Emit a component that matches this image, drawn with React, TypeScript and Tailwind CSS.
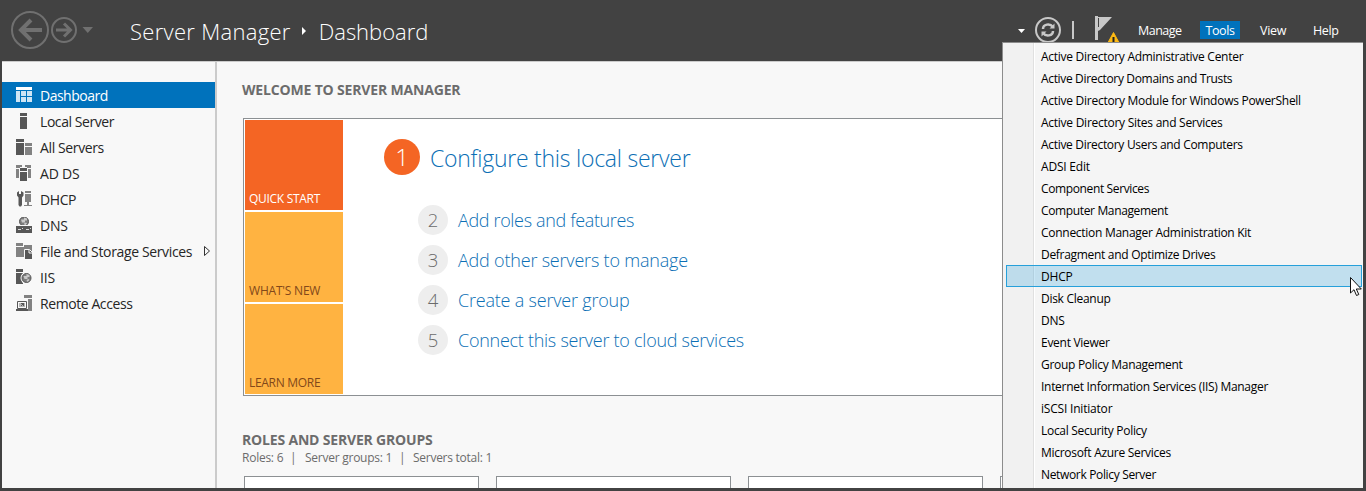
import React from 'react';

const menu: [string, string][] = [
  ['Active Directory Administrative Center', 'tracking-[-0.28px]'],
  ['Active Directory Domains and Trusts', 'tracking-[-0.34px]'],
  ['Active Directory Module for Windows PowerShell', 'tracking-[-0.27px]'],
  ['Active Directory Sites and Services', 'tracking-[-0.26px]'],
  ['Active Directory Users and Computers', 'tracking-[-0.31px]'],
  ['ADSI Edit', 'tracking-[-0.2px]'],
  ['Component Services', 'tracking-[-0.37px]'],
  ['Computer Management', 'tracking-[-0.36px]'],
  ['Connection Manager Administration Kit', 'tracking-[-0.28px]'],
  ['Defragment and Optimize Drives', 'tracking-[-0.3px]'],
  ['DHCP', 'tracking-[-0.2px]'],
  ['Disk Cleanup', 'tracking-[-0.28px]'],
  ['DNS', 'tracking-[-0.2px]'],
  ['Event Viewer', 'tracking-[-0.28px]'],
  ['Group Policy Management', 'tracking-[-0.29px]'],
  ['Internet Information Services (IIS) Manager', 'tracking-[-0.29px]'],
  ['iSCSI Initiator', 'tracking-[-0.2px]'],
  ['Local Security Policy', 'tracking-[-0.3px]'],
  ['Microsoft Azure Services', 'tracking-[-0.29px]'],
  ['Network Policy Server', 'tracking-[-0.34px]'],
];

const Globe = ({ cx, cy }: { cx: number; cy: number }) => (
  <g>
    <circle cx={cx} cy={cy} r="4.500" fill="#7d7d7d" stroke="#575757" />
    <path d={`M${cx - 3} ${cy - 2}h3v-2l3 1v2h-2v2h-3zM${cx} ${cy + 2}l2-1 1 1-2 2z`} fill="#c9c9c9" />
  </g>
);

const icons: Record<string, React.ReactNode> = {
  Dashboard: (
    <>
      <path fill="#fff" d="M0 0h16v3H0z" />
      <path fill="#cfe5f4" d="M0 4h4v11H0zM5 4h5v5H5zM11 4h5v5h-5zM5 10h5v5H5zM11 10h5v5h-5z" />
    </>
  ),
  'Local Server': <path fill="#575757" d="M4 0h7v3H4zM4 4h7v12H4z" />,
  'All Servers': (
    <>
      <path fill="#575757" d="M0 0h8v3H0zM0 4h8v12H0z" />
      <path fill="#828282" d="M9 4h7v3H9zM9 8h7v8H9z" />
    </>
  ),
  'AD DS': (
    <>
      <path fill="#828282" d="M0 0h6v2H4v1H0zM9 0h6v3h-4V2H9zM0 4h3v9H0zM12 4h3v9h-3z" />
      <path fill="#575757" d="M4 3h7v3H4zM4 7h7v9H4z" />
    </>
  ),
  DHCP: (
    <>
      <path fill="#575757" d="M3 0v3h2V0l2.500 1.500v3L6 6.500V14l-1 1.500H3.500L2.500 14V6.500L1 4.500v-3z" />
      <path fill="#828282" d="M9 0h6v2H9zM9 3h6v8H9zM11 11h2v3h-2zM8 14h8v1H8z" />
    </>
  ),
  DNS: (
    <>
      <Globe cx={8} cy={4.5} />
      <path fill="#f8f8f8" d="M0 8h16v1H0z" />
      <path fill="#575757" d="M0 9h16v7H0z" />
      <path fill="#d8d8d8" d="M2 12h3v1H2zM10 12h3v1h-3zM6 11h1v1H6zM14 11h1v1h-1z" />
    </>
  ),
  'File and Storage Services': (
    <>
      <path fill="#828282" d="M0 0h7v3H0zM0 4h8v10H0zM8 2h8v3H8z" />
      <path fill="#828282" d="M7 4h9v9H7z" />
      <path fill="#575757" stroke="#f8f8f8" d="M8.500 6.500h5l3 3v7h-8z" />
      <path d="M13 7v3h3" fill="none" stroke="#f8f8f8" />
    </>
  ),
  IIS: (
    <>
      <path fill="#575757" d="M0 0h7v3H0zM0 4h7v11H0z" />
      <circle cx="10.500" cy="9" r="6" fill="#f8f8f8" />
      <Globe cx={10.5} cy={9} />
    </>
  ),
  'Remote Access': (
    <>
      <path fill="#828282" d="M8 0h8v3H8zM12 4h4v12h-4z" />
      <path fill="#f8f8f8" stroke="#575757" d="M1.500 6.500h9v7h-9z" />
      <path fill="#b5b5b5" d="M3 8h6v4H3z" />
      <path fill="#575757" d="M0 14h12v2H0zM5 8h3v3H7v-1H6v1H5v-1h1V9H5z" />
    </>
  ),
};

const nav: [string, string][] = [
  ['Dashboard', 'tracking-[-0.5px]'],
  ['Local Server', 'tracking-[-0.43px]'],
  ['All Servers', 'tracking-[-0.38px]'],
  ['AD DS', 'tracking-[-0.2px]'],
  ['DHCP', 'tracking-[-0.4px]'],
  ['DNS', 'tracking-[-0.2px]'],
  ['File and Storage Services', 'tracking-[-0.36px]'],
  ['IIS', 'tracking-[-0.2px]'],
  ['Remote Access', 'tracking-[-0.42px]'],
];

const steps: [string, string][] = [
  ['Add roles and features', 'tracking-[-0.35px]'],
  ['Add other servers to manage', 'tracking-[-0.2px]'],
  ['Create a server group', 'tracking-[-0.2px]'],
  ['Connect this server to cloud services', 'tracking-[-0.27px]'],
];

function Header() {
  return (
    <header className="flex h-[61px] shrink-0 items-start text-white">
      <svg width="110" height="60" viewBox="0 0 110 60" fill="none" className="shrink-0">
        <g stroke="#707070">
          <circle cx="30" cy="30" r="18" strokeWidth="2" />
          <path d="M42 30H21" strokeWidth="4" />
          <path d="M31 20L21 30l10 10" strokeWidth="4" />
          <circle cx="64" cy="30" r="12" strokeWidth="2" />
          <path d="M56 30h14M64 23.500l6.500 6.500-6.500 6.500" strokeWidth="3" />
        </g>
        <path d="M82.500 27h10.500l-5.250 6z" fill="#707070" />
      </svg>
      <div className="ml-5 mt-[15px] flex h-8 w-[860px] items-center text-[22px] leading-8 font-light">
        <span className="tracking-[0.3px]">Server Manager</span>
        <svg width="28" height="10" viewBox="0 0 28 10" className="shrink-0"><path d="M11 1l4 4-4 4z" fill="#fff" /></svg>
        <span className="tracking-[0px]">Dashboard</span>
      </div>
      <svg width="130" height="42" viewBox="0 0 130 42" fill="none" className="shrink-0">
        <path d="M28 29h7l-3.500 4z" fill="#fff" />
        <circle cx="58" cy="30" r="12" stroke="#c8c8c8" strokeWidth="2" />
        <path d="M53 29c0-5 7-6 10-2M63 31c0 5-7 6-10 2" stroke="#c8c8c8" strokeWidth="2.500" />
        <path d="M64.500 23.500v5h-5zM51.500 36.500v-5h5z" fill="#c8c8c8" />
        <path d="M83 21v18" stroke="#c8c8c8" strokeWidth="2" />
        <path d="M105 16h3v24h-3zM108 17h14l-12 13-2 1z" fill="#c8c8c8" />
        <path d="M108.500 18v9" stroke="#424242" />
        <path d="M123.500 32.500l6 11h-12z" fill="#fdb913" stroke="#fdb913" strokeLinejoin="round" />
        <path d="M123.500 37v5" stroke="#222" strokeWidth="2" />
      </svg>
      <nav className="ml-[10px] mt-[21px] flex h-[18px] items-center text-[12.500px] leading-[18px] font-normal">
        <span className="ml-2 w-[62px] pt-[2px] tracking-[-0.5px]">Manage</span>
        <span className="h-[18px] w-10 bg-[#0072bc] pt-px text-center leading-[18px] tracking-[-0.4px]">Tools</span>
        <span className="ml-5 w-[53px] pt-[2px] tracking-[-0.3px]">View</span>
        <span className="pt-[2px] tracking-[-0.4px]">Help</span>
      </nav>
    </header>
  );
}

function Sidebar() {
  return (
    <aside className="w-[215px] shrink-0 border-r-2 border-[#cbcbcb] pt-5 text-[14px] text-[#262626]">
      {nav.map(([label, t], i) => (
        <div key={label} className={`flex h-[26px] items-center pl-[14px] ${i === 0 ? 'bg-[#0072bc] text-white' : ''}`}>
          <svg width="16" height="16" viewBox="0 0 16 16" className="shrink-0" shapeRendering={i < 4 ? 'crispEdges' : 'auto'}>{icons[label]}</svg>
          <span className={`ml-2 whitespace-nowrap ${t}`}>{label}</span>
          {i === 6 && (
            <svg width="8" height="12" viewBox="0 0 8 12" className="ml-auto mr-1 shrink-0"><path d="M1.500 1.500v9l5-4.500z" fill="none" stroke="#333" /></svg>
          )}
        </div>
      ))}
    </aside>
  );
}

function Welcome() {
  return (
    <section className="mt-[18px] ml-px flex h-[278px] border border-r-0 border-[#8c9093] bg-white">
      <div className="flex w-[99px] shrink-0 flex-col gap-[2px] pt-px pl-px text-[12px] leading-4">
        <div className="flex h-[90px] items-end bg-[#f46524] pb-[3px] pl-1 text-white"><span className="tracking-[-0.3px]">QUICK START</span></div>
        <div className="flex h-[90px] items-end bg-[#ffb341] pb-[3px] pl-1 text-[#82481a]"><span className="tracking-[-0.2px]">WHAT'S NEW</span></div>
        <div className="flex h-[90px] items-end bg-[#ffb341] pb-[3px] pl-1 text-[#82481a]"><span className="tracking-[-0.3px]">LEARN MORE</span></div>
      </div>
      <div className="pt-5 pl-[41px] font-light text-[#0c6fb5]">
        <div className="flex h-9 items-center">
          <span className="flex size-9 items-center justify-center rounded-full bg-[#f46524] text-[24px] text-white">1</span>
          <span className="ml-[10px] pt-[2px] text-[23px] tracking-[-0.25px]">Configure this local server</span>
        </div>
        <div className="mt-[25px] ml-[34px]">
          {steps.map(([s, t], i) => (
            <div key={s} className="flex h-10 items-center">
              <span className="flex size-[30px] items-center justify-center rounded-full bg-[#eee] text-[18.500px] text-[#6b6b6b]">{i + 2}</span>
              <span className={`ml-[10px] whitespace-nowrap text-[18px] ${t}`}>{s}</span>
            </div>
          ))}
        </div>
      </div>
    </section>
  );
}

function ToolsMenu() {
  return (
    <div className="absolute top-[42px] left-[1002px] h-[446px] w-[361px] overflow-hidden border-t border-l border-[#8c8c8c] bg-[#f5f5f5] text-[12px] text-black">
      <div className="flex h-full">
        <div className="w-[31px] shrink-0 border-r border-[#e0e0e0] bg-[#f1f1f1]" />
        <div className="w-px bg-white" />
      </div>
      <ul className="absolute inset-x-0 top-[2px] pr-px pl-[3px]">
        {menu.map(([m, t], i) => (
          <li key={m} className={`flex h-[22px] items-center border pt-[2px] pl-[34px] ${i === 10 ? 'border-[#26a0da] bg-[#26a0da]/25' : 'border-transparent'}`}>
            <span className={`whitespace-nowrap ${t}`}>{m}</span>
          </li>
        ))}
      </ul>
      <svg width="13" height="20" viewBox="0 0 13 20" className="absolute top-[234px] left-[347px]">
        <path d="M.5.500v15.500l3.500-3.300 2.500 5.800 2.300-1-2.500-5.500h5z" fill="#fff" stroke="#111" />
      </svg>
    </div>
  );
}

export default function App() {
  return (
    <div className="relative flex h-[491px] w-[1366px] flex-col overflow-hidden bg-[#424242] font-['Open_Sans','Noto_Sans',sans-serif]">
      <Header />
      <div className="mr-[3px] mb-[3px] ml-[2px] flex min-h-0 flex-1 overflow-hidden border-t border-[#cbcbcb] bg-[#f8f8f8]">
        <Sidebar />
        <main className="min-w-0 flex-1 pt-[18px] pl-[25px] text-[#6c6c6c]">
          <h1 className="h-5 text-[14px] leading-5 font-bold"><span className="tracking-[-0.17px]">WELCOME TO SERVER MANAGER</span></h1>
          <Welcome />
          <h2 className="mt-[34px] h-5 text-[14px] leading-5 font-bold"><span className="tracking-[-0.18px]">ROLES AND SERVER GROUPS</span></h2>
          <div className="flex h-4 text-[12px] leading-4 whitespace-nowrap">
            <span className="w-[48px] tracking-[-0.25px]">Roles: 6</span>
            <span className="w-[15px]">|</span>
            <span className="w-[94px] tracking-[-0.25px]">Server groups: 1</span>
            <span className="w-[14px]">|</span>
            <span className="tracking-[-0.27px]">Servers total: 1</span>
          </div>
          <div className="mt-[10px] ml-[2px] flex gap-[17px]">
            {[0, 1, 2, 3].map((i) => (
              <div key={i} className="h-10 w-[235px] shrink-0 border border-[#8c9093] bg-white" />
            ))}
          </div>
        </main>
      </div>
      <ToolsMenu />
    </div>
  );
}
